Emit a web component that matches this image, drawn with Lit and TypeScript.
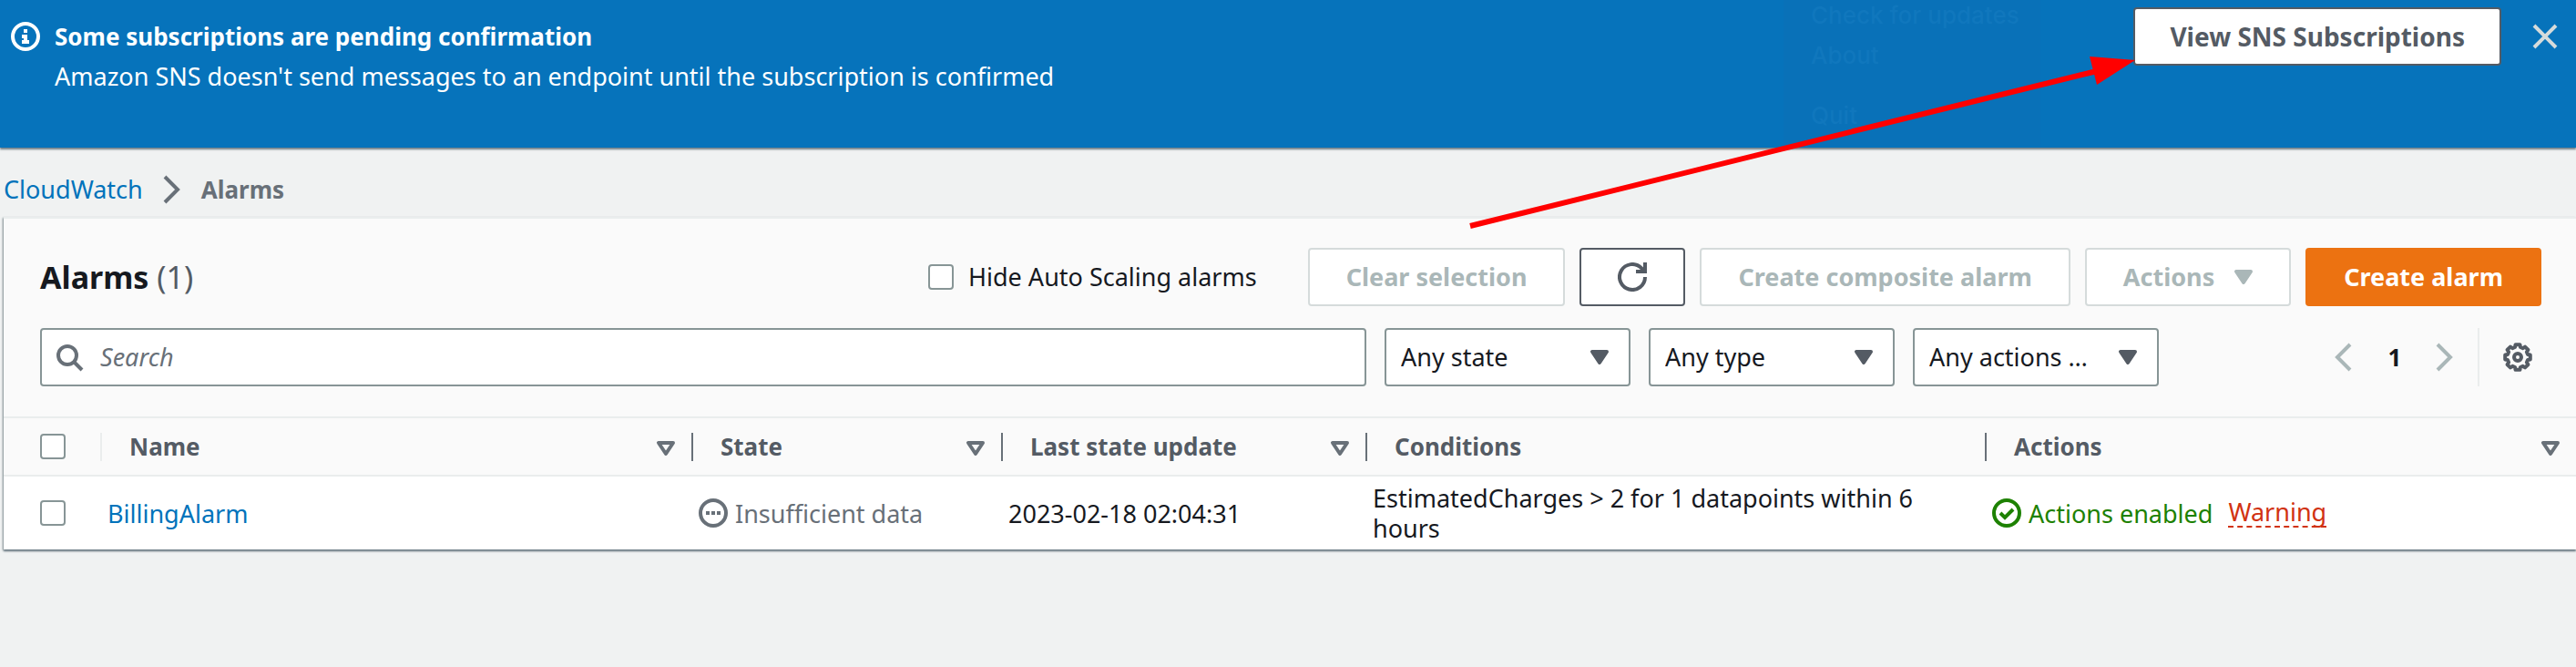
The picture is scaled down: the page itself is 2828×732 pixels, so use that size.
import { LitElement, html, css, svg } from "lit";
import { customElement, property } from "lit/decorators.js";

type Column = { label: string; sortable: boolean };

const COLUMNS: Column[] = [
  { label: "Name", sortable: true },
  { label: "State", sortable: true },
  { label: "Last state update", sortable: true },
  { label: "Conditions", sortable: false },
  { label: "Actions", sortable: true },
];

/** Outline of a gear with eight teeth, centred in a 16-unit box. */
function gearPath(): string {
  const points: string[] = [];
  for (let tooth = 0; tooth < 8; tooth++) {
    for (const [offset, radius] of [[-15, 5.7], [-10, 7], [10, 7], [15, 5.7]]) {
      const angle = ((tooth * 45 + offset) * Math.PI) / 180;
      points.push(`${(8 + radius * Math.cos(angle)).toFixed(2)} ${(8 + radius * Math.sin(angle)).toFixed(2)}`);
    }
  }
  return `M${points.join("L")}z`;
}

const ICONS: Record<string, unknown> = {
  info: svg`<circle cx="8" cy="8" r="7" fill="none" stroke="currentColor" stroke-width="2"/>
    <path d="M7 4h2v2H7zM6 7h3v3h1v2H6v-2h1V9H6z" fill="currentColor"/>`,
  close: svg`<path d="M2 2l12 12M14 2L2 14" fill="none" stroke="currentColor" stroke-width="2"/>`,
  right: svg`<path d="M4 1l7 7-7 7" fill="none" stroke="currentColor" stroke-width="2"/>`,
  left: svg`<path d="M11 1L4 8l7 7" fill="none" stroke="currentColor" stroke-width="2"/>`,
  search: svg`<circle cx="7" cy="7" r="5" fill="none" stroke="currentColor" stroke-width="2"/>
    <path d="M10.5 10.5L15 15" fill="none" stroke="currentColor" stroke-width="2"/>`,
  refresh: svg`<path d="M15 8a7 7 0 1 1-2.050-4.950L14.500 5" fill="none" stroke="currentColor" stroke-width="2"/>
    <path d="M15 0v5h-5" fill="none" stroke="currentColor" stroke-width="2"/>`,
  caret: svg`<path d="M4 5h8l-4 6z" fill="currentColor" stroke="currentColor" stroke-width="2" stroke-linejoin="round"/>`,
  sort: svg`<path d="M4 6h8l-4 6z" fill="none" stroke="currentColor" stroke-width="2" stroke-linejoin="round"/>`,
  pending: svg`<circle cx="8" cy="8" r="7" fill="none" stroke="currentColor" stroke-width="2"/>
    <path d="M4 7h2v2H4zM7 7h2v2H7zM10 7h2v2h-2z" fill="currentColor"/>`,
  success: svg`<circle cx="8" cy="8" r="7" fill="none" stroke="currentColor" stroke-width="2"/>
    <path d="M4.500 8l2.500 2.500L11.500 6" fill="none" stroke="currentColor" stroke-width="2"/>`,
  settings: svg`<circle cx="8" cy="8" r="2" fill="none" stroke="currentColor" stroke-width="2"/>
    <path d=${gearPath()} fill="none" stroke="currentColor" stroke-width="2" stroke-linejoin="round"/>`,
};

@customElement("cw-icon")
class CwIcon extends LitElement {
  @property() name = "";
  static styles = css`
    :host { display: block; flex: none; width: 32px; height: 32px; }
    svg { display: block; width: 100%; height: 100%; }
  `;
  render() {
    return html`<svg viewBox="0 0 16 16" aria-hidden="true">${ICONS[this.name]}</svg>`;
  }
}

@customElement("app-root")
class AppRoot extends LitElement {
  static styles = css`
    * { box-sizing: border-box; }
    :host {
      display: block;
      position: relative;
      min-height: 100vh;
      overflow: hidden;
      background: #f0f2f2;
      color: #16191f;
      font: 400 27px/44px "Noto Sans", sans-serif;
    }
    button, input, select { font: inherit; color: inherit; margin: 0; }
    a { color: #0073bb; text-decoration: none; }
    .banner {
      position: relative;
      display: flex;
      align-items: flex-start;
      gap: 16px;
      min-height: 162px;
      padding: 8px 18px 8px 12px;
      background: #0673bb;
      color: #fff;
      box-shadow: 0 2px 2px #6d7c85;
    }
    .banner cw-icon { margin-top: 16px; }
    .message { position: relative; flex: 1; padding-top: 10px; }
    .message p, .message h2 { margin: 0; font-size: inherit; line-height: 44px; }
    .bold, .message h2 { font-weight: 700; font-size: 26px; }
    .close { display: flex; border: 0; background: none; padding: 0; margin-left: 16px; color: #d5dbdb; }
    .ghost {
      position: absolute;
      top: -5px;
      right: 588px;
      width: 282px;
      height: 165px;
      margin: 0;
      padding: 0 30px;
      list-style: none;
      white-space: nowrap;
      background: #0971b8;
      color: #1077bd;
      font: 500 26px/44px Inter, sans-serif;
    }
    .ghost li:last-child { margin-top: 22px; }
    .btn {
      display: flex;
      align-items: center;
      justify-content: center;
      height: 64px;
      padding: 0 40px;
      border: 2px solid #545b64;
      border-radius: 4px;
      background: #fff;
      color: #545b64;
      font-weight: 700;
      font-size: 27px;
      white-space: nowrap;
    }
    .banner .btn { padding: 0 38px; font-size: 28px; }
    .btn:disabled { border-color: #d5dbdb; color: #aab7b8; }
    .btn.primary { border-color: #ec7211; background: #ec7211; color: #fff; }
    .btn cw-icon { margin: 0 -6px 0 16px; }
    .btn.icon { width: 116px; padding: 0; }
    .btn.icon cw-icon { margin: 0; }
    .crumbs { display: flex; align-items: center; gap: 16px; padding: 24px 5px 8px 4px; }
    .crumbs span { color: #687078; }
    .crumbs cw-icon { color: #687078; }
    .card {
      margin-left: 4px;
      border-top: 2px solid #eaeded;
      background: #fafafa;
      box-shadow: 0 2px 2px #6d7c85, -1px 1px 2px #9aa5a8;
    }
    .head { display: flex; align-items: center; gap: 16px; padding: 32px 38px 24px 40px; }
    h1 { flex: 1; margin: 0; font-size: 34px; font-weight: 700; }
    h1 span { font-weight: 400; color: #545b64; }
    .check { display: flex; align-items: center; gap: 16px; margin-right: 40px; }
    input[type="checkbox"] {
      display: block;
      flex: none;
      appearance: none;
      width: 28px;
      height: 28px;
      border: 2px solid #879596;
      border-radius: 4px;
      background: #fff;
    }
    .filters { display: flex; align-items: center; padding: 0 38px 33px 40px; gap: 20px; }
    .field {
      position: relative;
      display: flex;
      align-items: center;
      height: 64px;
      border: 2px solid #879596;
      border-radius: 4px;
      background: #fff;
    }
    .search { flex: 1; padding: 0 14px; gap: 18px; color: #687078; }
    .search input { flex: 1; min-width: 0; border: 0; padding: 0; background: none; outline: 0; }
    .search input::placeholder { color: #687078; font-style: italic; opacity: 1; }
    .pick { width: 270px; }
    .pick select {
      appearance: none;
      width: 100%;
      height: 100%;
      padding: 0 64px 0 16px;
      border: 0;
      background: none;
      text-overflow: ellipsis;
    }
    .pick cw-icon { position: absolute; right: 16px; color: #545b64; pointer-events: none; }
    .pager { display: flex; align-items: center; margin-left: 168px; gap: 24px; color: #aab7b8; }
    .pager button { display: flex; padding: 0; border: 0; background: none; color: inherit; }
    .pager strong { width: 30px; text-align: center; color: #16191f; font-size: 26px; }
    .prefs { border-left: 2px solid #eaeded; height: 64px; display: flex; align-items: center; padding: 0 10px 0 26px; margin-left: -4px; }
    .pager .prefs button { color: #545b64; }
    table { width: 100%; border-collapse: collapse; table-layout: fixed; }
    .c0 { width: 108px; } .c1 { width: 649px; } .c2 { width: 340px; }
    .c3 { width: 400px; } .c4 { width: 680px; }
    th { height: 64px; padding: 0; border-top: 2px solid #eaeded; border-bottom: 2px solid #eaeded; }
    th .cell {
      display: flex;
      align-items: center;
      justify-content: space-between;
      height: 31px;
      padding: 0 12px 0 30px;
      border-right: 2px solid #687078;
      color: #545b64;
      font-size: 26px;
      line-height: 31px;
    }
    th:last-child .cell { border: 0; }
    th .cell.pickcell { padding: 0 0 0 40px; border-color: #eaeded; }
    th cw-icon { color: #687078; }
    td { height: 81px; padding: 7px 24px 7px 6px; background: #fff; line-height: 33px; }
    td:first-child { padding-left: 40px; }
    .status { display: flex; align-items: center; gap: 8px; color: #687078; white-space: nowrap; }
    .status.ok { color: #1d8102; }
    .warn { margin-left: 9px; color: #d13212; border-bottom: 2px dashed #d13212; line-height: 30px; }
    .arrow { position: absolute; top: 0; right: 480px; width: 740px; height: 260px; pointer-events: none; }
  `;

  private picker(label: string) {
    return html`<div class="field pick">
      <select aria-label=${label}><option>${label}</option></select>
      <cw-icon name="caret"></cw-icon>
    </div>`;
  }

  render() {
    return html`
      <section class="banner">
        <ul class="ghost"><li>Check for updates</li><li>About</li><li>Quit</li></ul>
        <cw-icon name="info"></cw-icon>
        <div class="message">
          <h2>Some subscriptions are pending confirmation</h2>
          <p>Amazon SNS doesn't send messages to an endpoint until the subscription is confirmed</p>
        </div>
        <button class="btn">View SNS Subscriptions</button>
        <button class="close" aria-label="Dismiss"><cw-icon name="close"></cw-icon></button>
      </section>
      <nav class="crumbs">
        <a href="#">CloudWatch</a><cw-icon name="right"></cw-icon><span class="bold">Alarms</span>
      </nav>
      <main class="card">
        <div class="head">
          <h1>Alarms <span>(1)</span></h1>
          <label class="check"><input type="checkbox" />Hide Auto Scaling alarms</label>
          <button class="btn" disabled>Clear selection</button>
          <button class="btn icon" aria-label="Refresh"><cw-icon name="refresh"></cw-icon></button>
          <button class="btn" disabled>Create composite alarm</button>
          <button class="btn" disabled>Actions<cw-icon name="caret"></cw-icon></button>
          <button class="btn primary">Create alarm</button>
        </div>
        <div class="filters">
          <div class="field search">
            <cw-icon name="search"></cw-icon>
            <input type="text" placeholder="Search" aria-label="Search" />
          </div>
          ${["Any state", "Any type", "Any actions …"].map((l) => this.picker(l))}
          <div class="pager">
            <button aria-label="Previous page"><cw-icon name="left"></cw-icon></button>
            <strong>1</strong>
            <button aria-label="Next page"><cw-icon name="right"></cw-icon></button>
            <div class="prefs"><button aria-label="Preferences"><cw-icon name="settings"></cw-icon></button></div>
          </div>
        </div>
        <table>
          <colgroup><col class="c0" /><col class="c1" /><col class="c2" /><col class="c3" /><col class="c4" /><col /></colgroup>
          <thead>
            <tr>
              <th><div class="cell pickcell"><input type="checkbox" aria-label="Select all" /></div></th>
              ${COLUMNS.map((c) => html`<th><div class="cell">${c.label}${c.sortable ? html`<cw-icon name="sort"></cw-icon>` : ""}</div></th>`)}
            </tr>
          </thead>
          <tbody>
            <tr>
              <td><input type="checkbox" aria-label="Select BillingAlarm" /></td>
              <td><a href="#">BillingAlarm</a></td>
              <td><div class="status"><cw-icon name="pending"></cw-icon>Insufficient data</div></td>
              <td>2023-02-18 02:04:31</td>
              <td>EstimatedCharges &gt; 2 for 1 datapoints within 6 hours</td>
              <td><div class="status ok"><cw-icon name="success"></cw-icon>Actions enabled<span class="warn">Warning</span></div></td>
            </tr>
          </tbody>
        </table>
      </main>
      <svg class="arrow" viewBox="0 0 740 260" aria-hidden="true">
        <path d="M6 248L694 78" stroke="#f00" stroke-width="6" />
        <path d="M736 66L686 62L694 93z" fill="#f00" />
      </svg>
    `;
  }
}
